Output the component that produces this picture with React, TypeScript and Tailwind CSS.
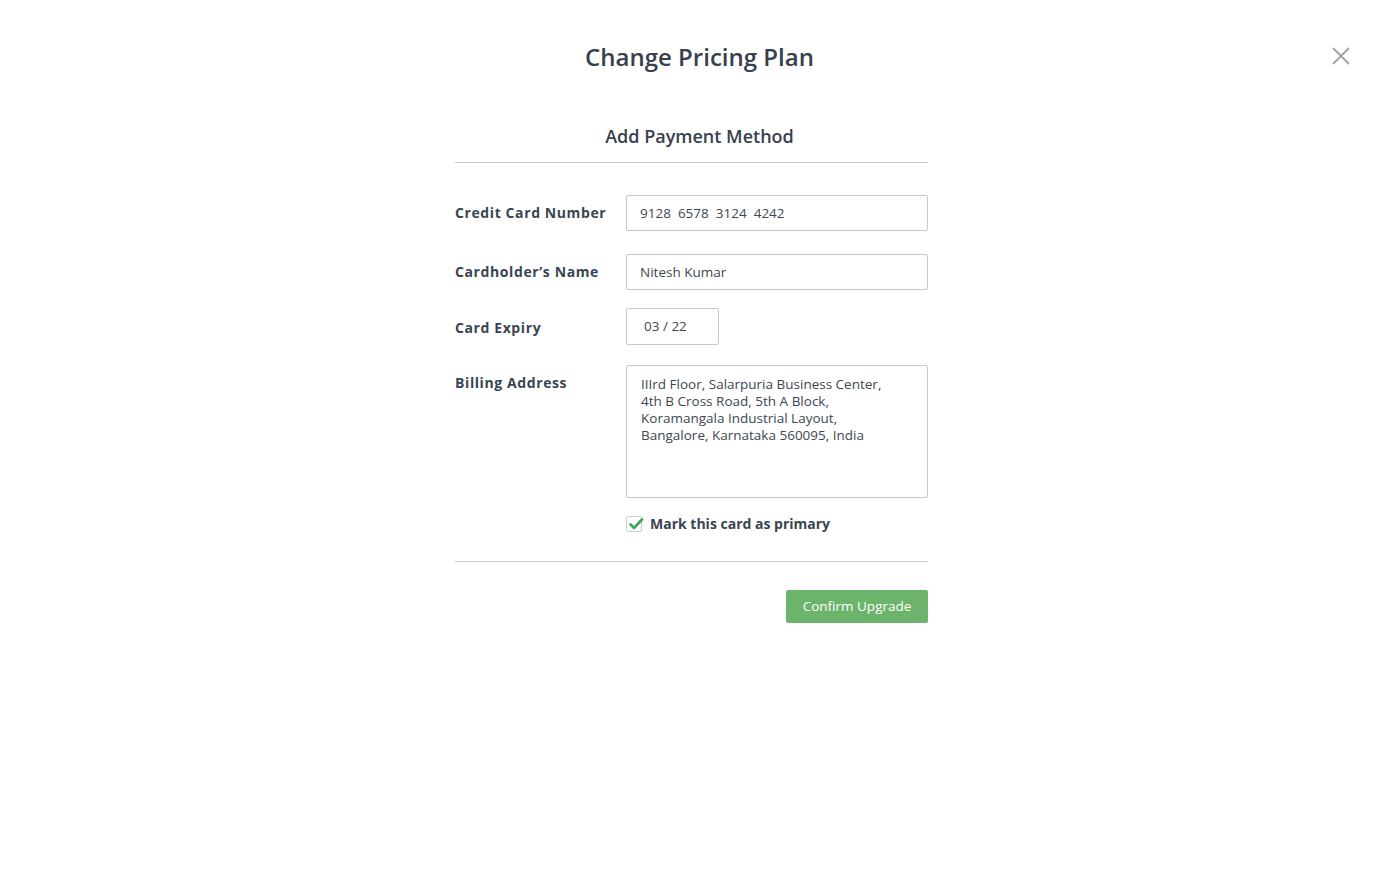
import React from "react";

export default function App() {
  const font = { fontFamily: '"Open Sans", "Liberation Sans", sans-serif' };
  return (
    <div className="relative w-full min-h-[873px] bg-white text-[#3a4552]" style={font}>
      <button className="absolute left-[1332px] top-[47px] w-[18px] h-[18px]" aria-label="close">
        <svg width="18" height="18" viewBox="0 0 18 18">
          <path d="M1 1 L17 17 M17 1 L1 17" stroke="#9ba1a8" strokeWidth="1.8" fill="none" />
        </svg>
      </button>
      <h1 className="pt-[41px] text-center text-[24px] leading-[32px] font-semibold text-[#36414d]">Change Pricing Plan</h1>
      <div className="ml-[455px] w-[473px] mt-[51px]">
        <h2 className="-mr-[16px] text-center text-[18px] leading-[24px] font-semibold pb-[14px] text-[#36414d]">
          Add Payment Method
        </h2>
        <div className="border-t border-[#c9cbce]" />
        <div className="mt-[32px] flex flex-col">
          <div className="flex items-center h-9">
            <label className="w-[171px] text-[14px] font-bold tracking-[0.6px] -mt-[1px]">Credit Card Number</label>
            <div className="w-[302px] h-9 border border-[#c8c8c8] rounded-[2px] px-[13px] flex items-center text-[13.5px] text-[#40474f]">
              9128&nbsp; 6578&nbsp; 3124&nbsp; 4242
            </div>
          </div>
          <div className="flex items-center h-9 mt-[23px]">
            <label className="w-[171px] text-[14px] font-bold tracking-[0.6px] -mt-[1px]">Cardholder’s Name</label>
            <div className="w-[302px] h-9 border border-[#c8c8c8] rounded-[2px] px-[13px] flex items-center text-[13.5px] text-[#40474f]">
              Nitesh Kumar
            </div>
          </div>
          <div className="flex items-center h-[37px] mt-[18px]">
            <label className="w-[171px] text-[14px] font-bold tracking-[0.6px] mt-[2px]">Card Expiry</label>
            <div className="w-[93px] h-[37px] border border-[#c8c8c8] rounded-[2px] px-[17px] flex items-center text-[13.5px] text-[#40474f]">
              03 / 22
            </div>
          </div>
          <div className="flex items-start mt-[20px]">
            <label className="w-[171px] h-9 flex items-center text-[14px] font-bold tracking-[0.6px] -mt-[1px]">Billing Address</label>
            <div className="w-[302px] h-[133px] border border-[#c8c8c8] rounded-[2px] px-[14px] pt-[10px] text-[13.5px] leading-[17px] text-[#40474f]">
              IIIrd Floor, Salarpuria Business Center,
              <br />
              4th B Cross Road, 5th A Block,
              <br />
              Koramangala Industrial Layout,
              <br />
              Bangalore, Karnataka 560095, India
            </div>
          </div>
          <div className="flex items-center mt-[18px] ml-[171px] h-[16px]">
            <span className="relative w-[16px] h-[16px] border border-[#c9cbce] rounded-[2px] bg-white">
              <svg className="absolute left-[1px] top-[-1px]" width="16" height="16" viewBox="0 0 16 16">
                <path d="M2.5 8.5 L6 12 L14 3.5" stroke="#43a85a" strokeWidth="2.8" fill="none" strokeLinecap="round" strokeLinejoin="round" />
              </svg>
            </span>
            <span className="ml-[8px] text-[14px] font-bold tracking-[0px] -mt-[1px]">Mark this card as primary</span>
          </div>
        </div>
        <div className="mt-[29px] border-t border-[#c9cbce]" />
        <div className="flex justify-end mt-[28px]">
          <button className="w-[142px] h-[33px] rounded-[2px] bg-[#6cb36b] text-white text-[13.5px]">Confirm Upgrade</button>
        </div>
      </div>
    </div>
  );
}
